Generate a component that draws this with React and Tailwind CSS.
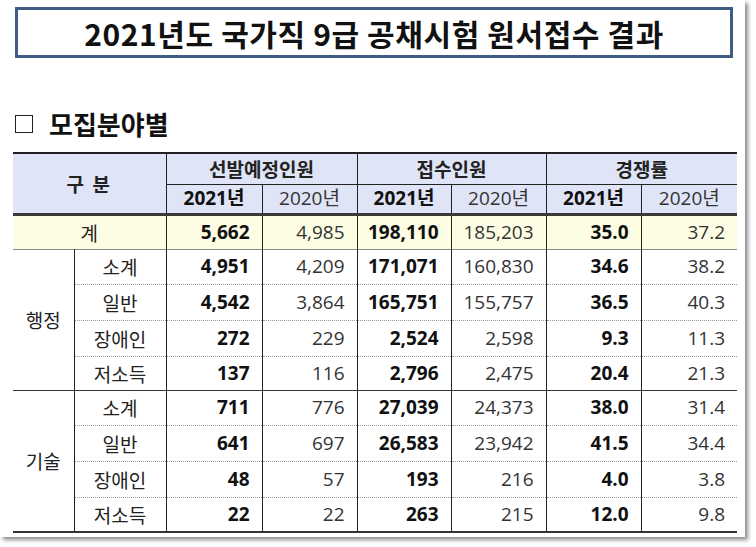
const rows = [
    { group: '행정', label: '소계', v: ['4,951', '4,209', '171,071', '160,830', '34.6', '38.2'] },
    { label: '일반', v: ['4,542', '3,864', '165,751', '155,757', '36.5', '40.3'] },
    { label: '장애인', v: ['272', '229', '2,524', '2,598', '9.3', '11.3'] },
    { label: '저소득', v: ['137', '116', '2,796', '2,475', '20.4', '21.3'] },
    { group: '기술', label: '소계', v: ['711', '776', '27,039', '24,373', '38.0', '31.4'] },
    { label: '일반', v: ['641', '697', '26,583', '23,942', '41.5', '34.4'] },
    { label: '장애인', v: ['48', '57', '193', '216', '4.0', '3.8'] },
    { label: '저소득', v: ['22', '22', '263', '215', '12.0', '9.8'] },
];

const heights = ['h-[35px]', 'h-[36px]', 'h-[36px]', 'h-[34px]', 'h-[35px]', 'h-[36px]', 'h-[36px]', 'h-[35px]'];

const NumCells = ({ v }) =>
    v.map((n, i) => (
        <td
            key={i}
            className={`border-l border-[#222] pr-[12px] text-right ${i % 2 === 0 ? 'font-bold text-[#111]' : 'font-normal text-[#333]'}`}
        >
            {n}
        </td>
    ));

const App = () => {
    return (
        <div className="w-[756px] h-[547px] bg-white">
            <div className="w-[745px] h-[537px] bg-white shadow-[3px_3px_4px_rgba(0,0,0,0.45)] pt-[7px] font-['Noto_Sans_CJK_KR',sans-serif]">
                <div className="ml-[15px] w-[718px] h-[51px] border-[3px] border-[#3e5c85] flex items-center justify-center">
                    <h1 className="text-[30px] font-bold text-[#111] tracking-[0.6px] leading-none">
                        2021년도 국가직 9급 공채시험 원서접수 결과
                    </h1>
                </div>

                <div className="mt-[52px] ml-[15px] h-[28px] flex items-center gap-[16px] text-[26px] font-bold text-[#111] leading-none">
                    <span className="w-[18px] h-[18px] border-[1.5px] border-[#222]"></span>
                    <span>모집분야별</span>
                </div>

                <table className="mt-[14px] ml-[13px] w-[724px] table-fixed border-collapse text-[19px] font-['Open_Sans','Noto_Sans_CJK_KR',sans-serif] text-[#222] leading-none">
                    <colgroup>
                        <col className="w-[61px]" />
                        <col className="w-[92px]" />
                        <col className="w-[96px]" />
                        <col className="w-[95px]" />
                        <col className="w-[94px]" />
                        <col className="w-[95px]" />
                        <col className="w-[95px]" />
                        <col className="w-[96px]" />
                    </colgroup>
                    <thead>
                        <tr className="h-[31px] bg-[#dfe4f6] border-t-2 border-[#222]">
                            <th rowSpan={2} colSpan={2} className="font-bold font-['Noto_Sans_CJK_KR',sans-serif] tracking-[2px] border-b-[3px] border-[#3a3a3a]">
                                구 분
                            </th>
                            <th colSpan={2} className="font-bold font-['Noto_Sans_CJK_KR',sans-serif] border-l border-b border-[#222]">선발예정인원</th>
                            <th colSpan={2} className="font-bold font-['Noto_Sans_CJK_KR',sans-serif] border-l border-b border-[#222]">접수인원</th>
                            <th colSpan={2} className="font-bold font-['Noto_Sans_CJK_KR',sans-serif] border-l border-b border-[#222]">경쟁률</th>
                        </tr>
                        <tr className="h-[30px] bg-[#dfe4f6] border-b-[3px] border-[#3a3a3a]">
                            {['2021년', '2020년', '2021년', '2020년', '2021년', '2020년'].map((y, i) => (
                                <th
                                    key={i}
                                    className={`border-l border-[#222] ${i % 2 === 0 ? 'font-bold text-[#111]' : 'font-normal text-[#333]'}`}
                                >
                                    {y}
                                </th>
                            ))}
                        </tr>
                    </thead>
                    <tbody>
                        <tr className="h-[35px] bg-[#fdfde4] border-b border-[#8a8a8a]">
                            <td colSpan={2} className="text-center font-['Noto_Sans_CJK_KR',sans-serif]">계</td>
                            <NumCells v={['5,662', '4,985', '198,110', '185,203', '35.0', '37.2']} />
                        </tr>
                        {rows.map((r, idx) => (
                            <tr
                                key={idx}
                                className={`${heights[idx]} ${idx === 3 ? 'border-b border-[#333]' : idx === 7 ? 'border-b-2 border-[#333]' : 'border-b border-dotted border-[#9a9a9a]'}`}
                            >
                                {r.group && (
                                    <td rowSpan={4} className="text-center font-['Noto_Sans_CJK_KR',sans-serif] border-b border-[#333]">
                                        {r.group}
                                    </td>
                                )}
                                <td className="text-center border-l border-[#222] font-['Noto_Sans_CJK_KR',sans-serif]">
                                    {r.label}
                                </td>
                                <NumCells v={r.v} />
                            </tr>
                        ))}
                    </tbody>
                </table>
            </div>
        </div>
    );
};

export default App;
